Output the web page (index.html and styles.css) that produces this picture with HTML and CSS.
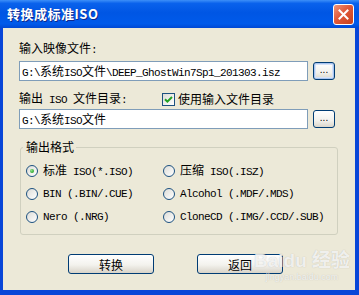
FILE: index.html
```html
<!DOCTYPE html>
<html lang="zh-CN">
<head>
    <meta charset="UTF-8">
    <title>转换成标准ISO</title>
    <link rel="stylesheet" href="styles.css">
</head>
<body>
    <div class="window">
        <div class="titlebar">
            <span class="title">转换成标准ISO</span>
            <button class="close" title="关闭">
                <svg width="11" height="11" viewBox="0 0 11 11"><path d="M1.5 1.5 L9.5 9.5 M9.5 1.5 L1.5 9.5" stroke="#fff" stroke-width="2" stroke-linecap="square"/></svg>
            </button>
        </div>

        <div class="client">
            <div class="field-label">输入映像文件<span class="m">:</span></div>
            <div class="path-row">
                <div class="path">
                    <span class="m">G:\</span>系统<span class="m">ISO</span>文件<span class="m">\DEEP_GhostWin7Sp1_201303.isz</span>
                </div>
                <button class="browse focused">...</button>
            </div>

            <div class="out-row">
                <div class="out-label">输出<span class="m"> ISO </span>文件目录<span class="m">:</span></div>
                <label class="check">
                    <span class="box">
                        <svg width="9" height="9" viewBox="0 0 9 9"><path d="M1 4.2 L3.4 6.6 L8 2" fill="none" stroke="#21A121" stroke-width="2"/></svg>
                    </span>
                    <span>使用输入文件目录</span>
                </label>
            </div>
            <div class="path-row">
                <div class="path">
                    <span class="m">G:\</span>系统<span class="m">ISO</span>文件
                </div>
                <button class="browse">...</button>
            </div>

            <fieldset class="group">
                <legend>输出格式</legend>
                <div class="formats">
                    <div class="radio-item"><span class="radio checked"></span><span>标准<span class="m"> ISO(*.ISO)</span></span></div>
                    <div class="radio-item"><span class="radio"></span><span>压缩<span class="m"> ISO(.ISZ)</span></span></div>
                    <div class="radio-item"><span class="radio"></span><span class="m">BIN (.BIN/.CUE)</span></div>
                    <div class="radio-item"><span class="radio"></span><span class="m">Alcohol (.MDF/.MDS)</span></div>
                    <div class="radio-item"><span class="radio"></span><span class="m">Nero (.NRG)</span></div>
                    <div class="radio-item"><span class="radio"></span><span class="m">CloneCD (.IMG/.CCD/.SUB)</span></div>
                </div>
            </fieldset>

            <div class="btn-row">
                <button class="btn">转换</button>
                <button class="btn">返回</button>
            </div>

            <div class="watermark">
                <div class="wm-big">Baidu 经验</div>
                <div class="wm-small">jingyan.baidu.com</div>
            </div>
        </div>
    </div>
</body>
</html>
```

FILE: styles.css
```css
:root {
    --face: #ECE9D8;
    --frame: #0846D8;
    --edit-border: #7F9DB9;
    --btn-border: #003C74;
    --group-border: #D0D0BF;
}

body {
    margin: 0;
    font-family: "Noto Sans CJK SC", sans-serif;
    font-size: 12px;
    line-height: 14px;
    color: #000;
}

.m {
    font-family: "Liberation Mono", monospace;
    font-size: 11px;
    letter-spacing: -0.6px;
    white-space: pre;
}

.window {
    width: 359px;
    height: 295px;
    display: flex;
    flex-direction: column;
    background: var(--frame);
}

.titlebar {
    height: 28px;
    flex: none;
    display: flex;
    align-items: center;
    justify-content: space-between;
    padding: 0 5px 0 7px;
    background: linear-gradient(to bottom, #3D8FF8 0%, #0A62EC 12%, #0056E4 45%, #005AEA 85%, #0048D4 100%);
}

.title {
    color: #fff;
    font-weight: bold;
    font-size: 13px;
    letter-spacing: 0.5px;
    text-shadow: 1px 1px #0F2A8C;
}

.close {
    width: 21px;
    height: 21px;
    padding: 0;
    display: flex;
    align-items: center;
    justify-content: center;
    border: 1px solid #fff;
    border-radius: 3px;
    background: linear-gradient(135deg, #F0957A 0%, #E0593A 45%, #C8411C 100%);
}

.client {
    position: relative;
    flex: 1;
    margin: 0 4px 5px 3px;
    padding: 13px 0 0 16px;
    background: var(--face);
}

.field-label {
    height: 14px;
    margin-bottom: 6px;
}

.path-row {
    display: flex;
    align-items: center;
    gap: 5px;
}

.path {
    box-sizing: border-box;
    width: 289px;
    height: 20px;
    padding: 2px 2px 0;
    background: #fff;
    border: 1px solid var(--edit-border);
    white-space: nowrap;
    overflow: hidden;
}

.browse {
    box-sizing: border-box;
    width: 22px;
    height: 18px;
    padding: 0 0 4px;
    font-family: "Liberation Sans", sans-serif;
    font-size: 10px;
    border: 1px solid var(--btn-border);
    border-radius: 3px;
    background: linear-gradient(to bottom, #fff 0%, #F2F1EC 60%, #DAD6CB 100%);
}

.browse.focused {
    box-shadow: inset 0 0 0 1px #A8C4F0, inset 0 0 0 2px #D6E2F7;
}

.out-row {
    display: flex;
    align-items: center;
    height: 14px;
    margin: 11px 0 3px;
}

.out-label {
    width: 143px;
}

.check {
    display: flex;
    align-items: center;
    gap: 3px;
}

.box {
    box-sizing: border-box;
    width: 13px;
    height: 13px;
    display: flex;
    align-items: center;
    justify-content: center;
    border: 1px solid #1C5180;
    background: linear-gradient(135deg, #DCDCD7 0%, #fff 100%);
}

.group {
    box-sizing: border-box;
    width: 318px;
    margin: 11px 0 0 1px;
    padding: 5px 0 6px 2px;
    border: 1px solid var(--group-border);
    border-radius: 3px;
}

.group legend {
    padding: 0 2px 0 3px;
    line-height: 14px;
}

.formats {
    display: grid;
    grid-template-columns: 137px auto;
    grid-auto-rows: 23px;
    padding-left: 3px;
}

.radio-item {
    display: flex;
    align-items: center;
    gap: 5px;
}

.radio {
    box-sizing: border-box;
    width: 12px;
    height: 12px;
    border: 1px solid #1C5180;
    border-radius: 50%;
    background: linear-gradient(135deg, #DCDCD7 0%, #fff 100%);
    display: flex;
    align-items: center;
    justify-content: center;
}

.radio.checked::after {
    content: "";
    width: 4px;
    height: 4px;
    border-radius: 50%;
    background: radial-gradient(circle at 35% 35%, #8EE08E 0%, #21A121 80%);
}

.btn-row {
    display: flex;
    gap: 43px;
    margin-top: 19px;
    padding-left: 49px;
}

.btn {
    box-sizing: border-box;
    width: 86px;
    height: 20px;
    padding: 0;
    font-family: "Noto Sans CJK SC", sans-serif;
    font-size: 12px;
    border: 1px solid var(--btn-border);
    border-radius: 3px;
    background: linear-gradient(to bottom, #fff 0%, #F3F2ED 55%, #D8D3C8 100%);
}

.watermark {
    position: absolute;
    left: 251px;
    top: 222px;
    color: rgba(255, 255, 255, 0.8);
    text-shadow: 0 0 1px rgba(120, 120, 120, 0.45);
    text-align: center;
    pointer-events: none;
}

.wm-big {
    font-family: "Liberation Sans", "Noto Sans CJK SC", sans-serif;
    font-size: 19px;
    font-weight: bold;
    line-height: 22px;
}

.wm-small {
    font-family: "Liberation Sans", sans-serif;
    font-size: 9px;
    line-height: 10px;
}
```
